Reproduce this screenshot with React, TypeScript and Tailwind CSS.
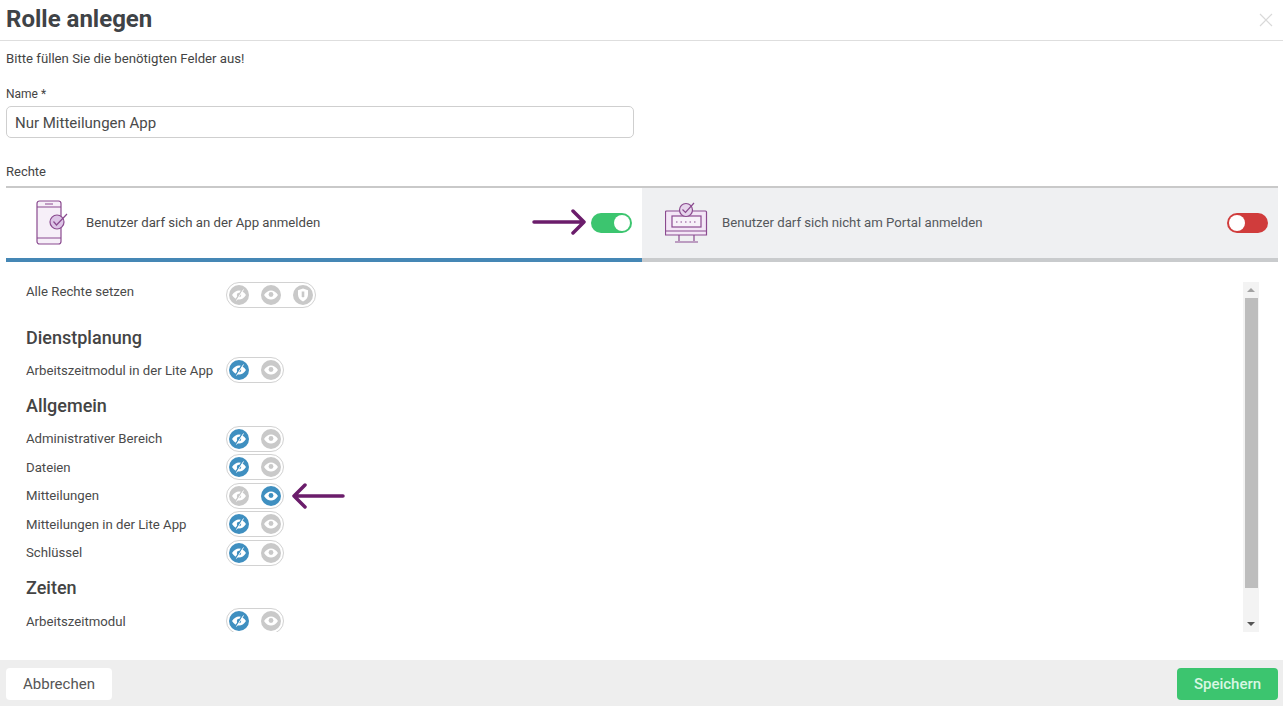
import React from 'react';

type Mode = 'off' | 'view' | 'admin';

const EyeOffIcon = () => (
  <svg width="16" height="12" viewBox="0 0 16 12" fill="none">
    <path d="M1 6c2-3 4.400-4.500 7-4.500S13 3 15 6c-2 3-4.400 4.500-7 4.500S3 9 1 6z" fill="#fff" />
    <circle cx="8" cy="6" r="2.200" fill="currentColor" />
    <path d="M11.500 .5 4.500 11.500" stroke="currentColor" strokeWidth="1.600" />
    <path d="M12.500 .5 5.500 11.500" stroke="#fff" strokeWidth="1" />
  </svg>
);

const EyeIcon = () => (
  <svg width="16" height="12" viewBox="0 0 16 12" fill="none">
    <path d="M1 6c2-3 4.400-4.500 7-4.500S13 3 15 6c-2 3-4.400 4.500-7 4.500S3 9 1 6z" fill="#fff" />
    <circle cx="8" cy="5.500" r="2.400" fill="currentColor" />
  </svg>
);

const ShieldIcon = () => (
  <svg width="12" height="14" viewBox="0 0 12 14" fill="none">
    <path d="M6 .5 11 2.200v4.300c0 3.200-2.100 5.600-5 7-2.900-1.400-5-3.800-5-7V2.200z" fill="#fff" />
    <path d="M4.700 3.500h2.600v4.800L6 9.800 4.700 8.300z" fill="currentColor" />
  </svg>
);

const Dot = ({ active, children }: { active?: boolean; children: React.ReactNode }) => (
  <span
    className={
      active
        ? 'flex h-5 w-5 items-center justify-center rounded-full bg-[#3f8fc0] text-[#3f8fc0]'
        : 'flex h-5 w-5 items-center justify-center rounded-full bg-[#c9c9c9] text-[#c9c9c9]'
    }
  >
    {children}
  </span>
);

const RightsSwitch = ({ mode, withAdmin }: { mode: Mode | 'none'; withAdmin?: boolean }) => (
  <div className="flex h-[26px] shrink-0 items-center gap-3 rounded-full border border-[#d2d2d2] px-[2px]">
    <Dot active={mode === 'off'}>
      <EyeOffIcon />
    </Dot>
    <Dot active={mode === 'view'}>
      <EyeIcon />
    </Dot>
    {withAdmin && (
      <Dot active={mode === 'admin'}>
        <ShieldIcon />
      </Dot>
    )}
  </div>
);

const RightRow = ({ label, mode = 'off', arrow }: { label: string; mode?: Mode; arrow?: boolean }) => (
  <div className="relative flex h-[28.5px] items-center">
    <span className="w-[200px] shrink-0 pt-[1px] text-[13.2px] text-[#4a4a4a]">{label}</span>
    <RightsSwitch mode={mode} />
    {arrow && (
      <svg className="absolute left-[265px] top-[1px]" width="54" height="26" viewBox="0 0 54 26" fill="none">
        <path d="M52 13H3M14 2 3 13l11 11" stroke="#6b1d6b" strokeWidth="3.500" strokeLinecap="round" strokeLinejoin="round" />
      </svg>
    )}
  </div>
);

const SectionTitle = ({ children, className }: { children: React.ReactNode; className: string }) => (
  <h3 className={`text-[18px] leading-[24px] font-medium text-[#444] ${className}`}>{children}</h3>
);

const PhoneIcon = () => (
  <svg width="36" height="46" viewBox="0 0 36 46" fill="none" stroke="#8a4a8f" strokeWidth="1.200">
    <rect x="1" y="1" width="24" height="43" rx="2.500" fill="#f6eff8" />
    <path d="M1 7h24M1 38h24M9 4h8" />
    <circle cx="21" cy="22" r="7" fill="#dcc4e6" />
    <path d="m17.500 21.500 3 3.500L31 14" />
  </svg>
);

const MonitorIcon = () => (
  <svg width="44" height="42" viewBox="0 0 44 42" fill="none" stroke="#8a4a8f" strokeWidth="1.200">
    <path d="M1.500 9h39a1 1 0 0 1 1 1v23h-41V10a1 1 0 0 1 1-1z" fill="#f3e6f6" />
    <path d="M1 29h41M14 33v6M29 33v6M10 40h23" />
    <rect x="7" y="14" width="29" height="11" fill="#f7f1f9" />
    <path d="M11 20h21" strokeDasharray="1.500 3" />
    <circle cx="21" cy="8" r="6.500" fill="#e6d4ec" />
    <path d="m17.500 7.500 3 3L29 1" />
  </svg>
);

const Knob = () => <span className="h-4 w-4 rounded-full bg-white" />;

export default function App() {
  return (
    <div className="flex h-[706px] w-[1283px] flex-col overflow-hidden bg-white font-['Roboto',sans-serif] text-[#444]">
      {/* Header */}
      <div className="flex h-[41px] shrink-0 items-center justify-between border-b border-[#dedede] pl-[6px] pr-[9px]">
        <h1 className="-translate-y-[1px] text-[24px] font-bold text-[#3f4347]">Rolle anlegen</h1>
        <svg width="16" height="16" viewBox="0 0 16 16" fill="none" stroke="#d9d9d9" strokeWidth="1.200">
          <path d="m2 2 12 12M14 2 2 14" />
        </svg>
      </div>

      <div className="flex min-h-0 flex-1 flex-col pl-[6px] pr-[5px]">
        <p className="mt-[10px] text-[13.200px] leading-[16px]">Bitte füllen Sie die benötigten Felder aus!</p>
        <label className="mt-[20px] text-[12px] leading-[14px]">Name *</label>
        <input
          readOnly
          value="Nur Mitteilungen App"
          className="mt-[5px] h-[32px] w-[628px] rounded-[5px] border border-[#cfcfcf] px-[8px] pt-[1px] text-[15px] text-[#4a4a4a] outline-none"
        />
        <div className="mt-[26px] text-[13px] leading-[16px]">Rechte</div>

        {/* Tabs */}
        <div className="mt-[6px] flex h-[76px] shrink-0 border-t-2 border-[#c9c9c9]">
          <div className="relative flex w-1/2 items-center border-b-4 border-[#4587b5] pl-[30px] pr-[10px]">
            <PhoneIcon />
            <span className="ml-[14px] text-[13.200px] text-[#4a4a4a]">Benutzer darf sich an der App anmelden</span>
            <svg className="absolute left-[526px] top-[20px]" width="54" height="28" viewBox="0 0 54 28" fill="none">
              <path d="M2 14h49M41 3l11 11-11 11" stroke="#6b1d6b" strokeWidth="3.500" strokeLinecap="round" strokeLinejoin="round" />
            </svg>
            <span className="ml-auto flex h-5 w-[41px] items-center justify-end rounded-full bg-[#3cc56f] pr-[2px]">
              <Knob />
            </span>
          </div>
          <div className="flex w-1/2 items-center border-b-4 border-[#c9cbcd] bg-[#eff0f2] pl-[23px] pr-[10px]">
            <MonitorIcon />
            <span className="ml-[13px] text-[13.200px] text-[#55585c]">Benutzer darf sich nicht am Portal anmelden</span>
            <span className="ml-auto flex h-5 w-[41px] items-center rounded-full bg-[#d03c3c] pl-[2px]">
              <Knob />
            </span>
          </div>
        </div>

        {/* Rights list */}
        <div className="mt-[20px] flex h-[350px] shrink-0">
          <div className="w-[1237px] shrink-0 overflow-hidden pl-[20px]">
            <div className="flex h-[26px] items-center">
              <span className="w-[200px] shrink-0 -translate-y-[3px] text-[13.200px] text-[#4a4a4a]">Alle Rechte setzen</span>
              <RightsSwitch mode="none" withAdmin />
            </div>
            <SectionTitle className="mt-[18px]">Dienstplanung</SectionTitle>
            <div className="mt-[6px]">
              <RightRow label="Arbeitszeitmodul in der Lite App" />
            </div>
            <SectionTitle className="mt-[9px]">Allgemein</SectionTitle>
            <div className="mt-[7px]">
              <RightRow label="Administrativer Bereich" />
              <RightRow label="Dateien" />
              <RightRow label="Mitteilungen" mode="view" arrow />
              <RightRow label="Mitteilungen in der Lite App" />
              <RightRow label="Schlüssel" />
            </div>
            <SectionTitle className="mt-[9px]">Zeiten</SectionTitle>
            <div className="mt-[7px]">
              <RightRow label="Arbeitszeitmodul" />
            </div>
          </div>
          {/* Scrollbar */}
          <div className="flex w-[16px] shrink-0 flex-col items-center bg-[#f3f3f3]">
            <div className="flex h-[16px] items-center justify-center">
              <span className="h-0 w-0 border-x-[4px] border-b-[4px] border-x-transparent border-b-[#a3a3a3]" />
            </div>
            <div className="h-[290px] w-[13px] bg-[#bdbdbd]" />
            <div className="flex flex-1 items-end justify-center pb-[6px]">
              <span className="h-0 w-0 border-x-[4px] border-t-[4px] border-x-transparent border-t-[#555]" />
            </div>
          </div>
        </div>
      </div>

      {/* Footer */}
      <div className="flex h-[46px] shrink-0 items-start justify-between bg-[#eeeeee] pl-[6px] pr-[5px] pt-[8px]">
        <button className="h-[32px] w-[106px] rounded-[4px] bg-white text-[15px] text-[#555]">Abbrechen</button>
        <button className="h-[32px] w-[101px] rounded-[4px] bg-[#3cc56f] text-[15px] font-medium text-[#d8f7e2]">Speichern</button>
      </div>
    </div>
  );
}
